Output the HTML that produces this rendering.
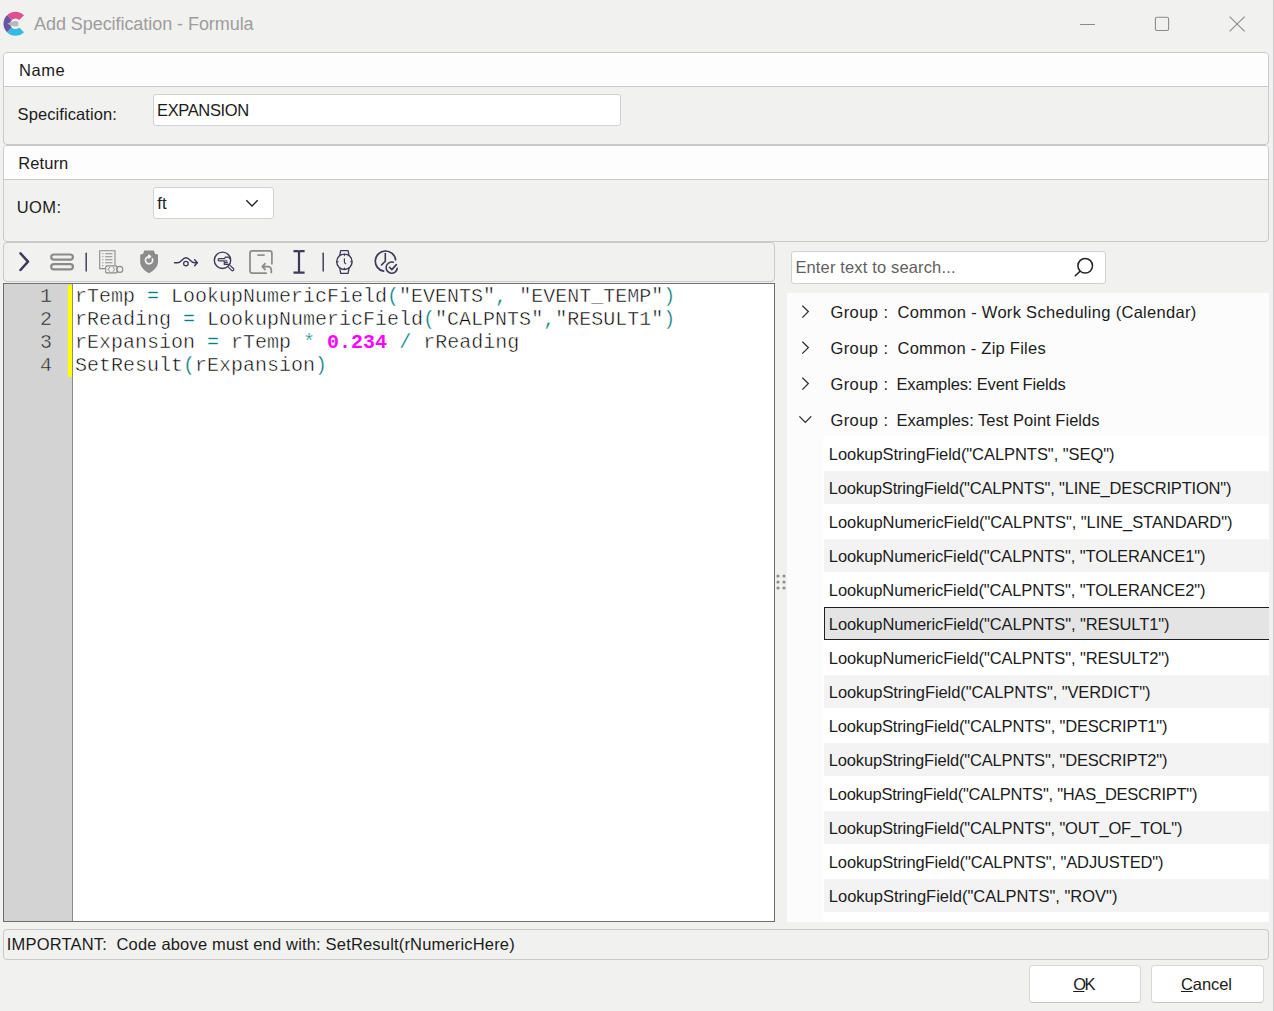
<!DOCTYPE html>
<html><head><meta charset="utf-8">
<style>
*{box-sizing:border-box;margin:0;padding:0}
html,body{width:1274px;height:1011px;overflow:hidden;background:#f1f1ef;font-family:"Liberation Sans",sans-serif;color:#1b1b1b}
.a{position:absolute}
.t{position:absolute;white-space:pre}
.panel{position:absolute;border:1px solid #c9c9c9;border-radius:4px;background:#f1f1ef;overflow:hidden}
.ph{position:absolute;left:0;right:0;top:0;background:#fdfdfd;border-bottom:1px solid #c9c9c9}
.inp{position:absolute;background:#fff;border:1px solid #d1d1d1;border-radius:3px}
.code{position:absolute;font-family:"Liberation Mono",monospace;font-size:20px;line-height:23px;white-space:pre;color:#000;-webkit-text-stroke:0.5px #fff}
.op{color:#008080;-webkit-text-stroke:0.3px #fff}
.num{color:#ff00ff;font-weight:bold;-webkit-text-stroke:0}
.ln{position:absolute;font-family:"Liberation Mono",monospace;font-size:20px;line-height:23px;color:#222;text-align:right;width:40px;-webkit-text-stroke:0.5px #d3d3d3}
.btn{position:absolute;background:#fff;border:1px solid #d8d8d8;border-bottom-color:#c6c6c6;border-radius:4px}
svg{position:absolute;overflow:visible}
</style></head><body>

<!-- title bar -->
<svg style="left:0;top:0" width="40" height="48" viewBox="0 0 40 48">
  <path d="M24.0 15.3 A12 12 0 0 0 7.0 15.3 L11.8 20.1 A5.2 5.2 0 0 1 19.2 20.1 Z" fill="#df4f92"/>
  <path d="M7.0 15.3 A12 12 0 0 0 7.0 32.3 L11.8 27.5 A5.2 5.2 0 0 1 11.8 20.1 Z" fill="#6b54a4"/>
  <path d="M7.0 32.3 A12 12 0 0 0 24.0 32.3 L19.2 27.5 A5.2 5.2 0 0 1 11.8 27.5 Z" fill="#33bce0"/>
  <path d="M7.5 23.8 C10 22.6 12 21 15.8 21 A2.8 2.8 0 0 1 15.8 26.6 C12 26.6 10 25 7.5 23.8 Z" fill="#b9b8bd"/>
</svg>
<div class="a" style="left:1080px;top:24px;width:15px;height:1px;background:#8a8a8a"></div>
<svg style="left:0;top:0" width="1274" height="48">
  <rect x="1155.4" y="17.2" width="13.2" height="13.3" rx="1.8" fill="none" stroke="#8a8a8a" stroke-width="1.1"/>
  <path d="M1229.6 16.6L1244.7 31.3M1244.7 16.6L1229.6 31.3" stroke="#8a8a8a" stroke-width="1.1"/>
</svg>
<div class="a" style="left:1273px;top:0;width:1px;height:1011px;background:#cdcdcd"></div>

<!-- Name panel -->
<div class="panel" style="left:3px;top:52px;width:1266px;height:93px">
  <div class="ph" style="height:34px"></div>
</div>
<div class="inp" style="left:153px;top:94px;width:468px;height:32px"></div>

<!-- Return panel -->
<div class="panel" style="left:3px;top:145px;width:1266px;height:97px">
  <div class="ph" style="height:34px"></div>
</div>
<div class="inp" style="left:153px;top:187px;width:121px;height:32px"></div>
<svg style="left:0;top:0" width="300" height="240">
  <path d="M246.3 200.3L252 206L257.7 200.3" fill="none" stroke="#222" stroke-width="1.4"/>
</svg>

<!-- toolbar -->
<div class="panel" style="left:3px;top:242px;width:772px;height:40px"></div>
<svg style="left:0;top:240px" width="420" height="42" viewBox="0 240 420 42">
  <g fill="none" stroke-linecap="round" stroke-linejoin="round">
    <!-- chevron -->
    <path d="M20.5 253.4L28 261.7L20.5 270" stroke="#3f3859" stroke-width="2.5"/>
    <!-- pills -->
    <rect x="51.2" y="254.5" width="21.7" height="5.2" rx="2.6" stroke="#8a8a8a" stroke-width="2.2"/>
    <rect x="51.2" y="264.1" width="21.7" height="5.3" rx="2.6" stroke="#8a8a8a" stroke-width="2.2"/>
    <!-- separators -->
    <path d="M86.2 253.3V271" stroke="#454060" stroke-width="1.5"/>
    <path d="M323.2 253.3V271" stroke="#454060" stroke-width="1.5"/>
    <!-- document -->
    <path d="M105 268.6H99.7V250.7H115V265" stroke="#8a8a8a" stroke-width="1.1" stroke-linecap="butt"/>
    <path d="M105.5 253.8H112M105.5 256.8H112M105.5 259.8H112M105.5 262.8H112" stroke="#8a8a8a" stroke-width="1.1"/>
    <path d="M102.7 253.8h.3M102.7 256.8h.3M102.7 259.8h.3M102.7 262.8h.3M102.7 265.6h.3" stroke="#8a8a8a" stroke-width="1.1"/>
    <rect x="105.7" y="265.9" width="11.3" height="7" rx="1" stroke="#8a8a8a" stroke-width="1.1"/>
    <path d="M109.6 267.4L108.2 269.4L109.6 271.4M113.2 267.4L114.6 269.4L113.2 271.4" stroke="#8a8a8a" stroke-width="1"/>
    <circle cx="119.8" cy="269.4" r="3" stroke="#8a8a8a" stroke-width="1.1"/>
    <!-- shield -->
    <path d="M144.2 250.5H153.8L155.2 254L158 254.4V262C158 267 153.5 270.8 149 273.3C144.5 270.8 140.2 267 140.2 262V254.4L143 254Z" fill="#8c8c8c" stroke="none"/>
    <path d="M152.4 258.9A3.6 3.6 0 1 1 149 256.6" stroke="#f4f4f4" stroke-width="1.7"/>
    <path d="M148.7 254.9L150.7 256.5L148.7 258.3Z" fill="#f4f4f4" stroke="#f4f4f4" stroke-width="1.2"/>
    <!-- wave -->
    <path d="M174.5 262.8H177.8C181.5 262.8 182.2 257.8 186 257.8C189.8 257.8 190.5 262.8 194.5 262.8H197" stroke="#3f3859" stroke-width="1.4"/>
    <path d="M194.6 259.8L197.4 262.8L194.6 265.8" stroke="#3f3859" stroke-width="1.4"/>
    <circle cx="185.9" cy="263.6" r="2.3" stroke="#3f3859" stroke-width="1.3"/>
    <!-- magnifier -->
    <circle cx="222.5" cy="260.3" r="8.2" stroke="#3f3859" stroke-width="1.4"/>
    <path d="M228.6 267.4L231.8 270.6A1.3 1.3 0 0 0 233.6 268.8L230.3 265.6" stroke="#3f3859" stroke-width="1.2"/>
    <path d="M224.3 260.8H219.2A1.1 1.1 0 0 1 219.2 258.6H224.7L225.2 257.2H228.5L230.2 258.8M225.5 260.8H227M224.3 260.8V264.4H229.2M225.5 262.6H227.3" stroke="#3f3859" stroke-width="1.2"/>
    <!-- box return -->
    <path d="M271.9 264.5V253.2A2.3 2.3 0 0 0 269.6 250.9H252.3A2.3 2.3 0 0 0 250 253.2V271A2.3 2.3 0 0 0 252.3 273.2H266.8" stroke="#8a8a8a" stroke-width="1.7" stroke-linecap="butt"/>
    <path d="M257.3 255.1H264.7" stroke="#8a8a8a" stroke-width="1.6" stroke-linecap="butt"/>
    <path d="M265.5 263.1L262.3 266.6L265.5 270.1M262.6 266.6H268A3.3 3.3 0 0 1 271.3 269.9V273.3" stroke="#8a8a8a" stroke-width="1.7" stroke-linecap="butt"/>
    <!-- I beam -->
    <path d="M293.5 251.2H297.4Q299 251.2 299 253V270.9Q299 272.7 297.4 272.7H293.5M304.6 251.2H300.6Q299 251.2 299 253M299 270.9Q299 272.7 300.6 272.7H304.6" stroke="#3f3859" stroke-width="2.2" stroke-linecap="butt"/>
    <!-- watch -->
    <circle cx="344.4" cy="261.8" r="7.7" stroke="#3f3859" stroke-width="1.4"/>
    <path d="M339.8 255.2L340.7 250.6H348.1L349 255.2M339.8 268.4L340.7 273.3H348.1L349 268.4" stroke="#3f3859" stroke-width="1.3"/>
    <path d="M344.4 258.8V261.8Q344.4 263.2 345.7 263.8" stroke="#3f3859" stroke-width="1.2"/>
    <path d="M344.4 254.3V255.6M344.4 268V269.3M336.9 261.8H338.2M350.6 261.8H351.9" stroke="#3f3859" stroke-width="1.1"/>
    <!-- clock check -->
    <path d="M395.6 259.8A10.2 10.2 0 1 0 383.6 271.2" stroke="#3f3859" stroke-width="1.7"/>
    <path d="M385.3 253.6V261.3L381.6 264.9" stroke="#3f3859" stroke-width="1.6"/>
    <path d="M393.3 262.3A5.6 5.6 0 1 0 397.3 268.2" stroke="#3f3859" stroke-width="1.6"/>
    <path d="M389.5 267.3L391.8 269.6L396.4 264.6" stroke="#3f3859" stroke-width="1.6"/>
  </g>
</svg>

<!-- editor -->
<div class="a" style="left:3px;top:283px;width:772px;height:639px;border:1px solid #6e6e6e;background:#fff"></div>
<div class="a" style="left:4px;top:284px;width:68px;height:637px;background:#d3d3d3"></div>
<div class="a" style="left:68px;top:285px;width:4px;height:92px;background:#ffff00"></div>
<div class="a" style="left:72px;top:284px;width:1px;height:637px;background:#8a8a8a"></div>
<div class="ln" style="left:12px;top:285px">1<br>2<br>3<br>4</div>
<div class="code" style="left:75px;top:285px">rTemp <span class="op">=</span> LookupNumericField<span class="op">(</span>"EVENTS"<span class="op">,</span> "EVENT_TEMP"<span class="op">)</span>
rReading <span class="op">=</span> LookupNumericField<span class="op">(</span>"CALPNTS"<span class="op">,</span>"RESULT1"<span class="op">)</span>
rExpansion <span class="op">=</span> rTemp <span class="op">*</span> <span class="num">0.234</span> <span class="op">/</span> rReading
SetResult<span class="op">(</span>rExpansion<span class="op">)</span></div>

<!-- splitter dots -->
<svg style="left:0;top:0" width="1274" height="1011">
  <g fill="#8e8e8e">
    <circle cx="778" cy="576" r="1.6"/><circle cx="784" cy="576" r="1.6"/>
    <circle cx="778" cy="582" r="1.6"/><circle cx="784" cy="582" r="1.6"/>
    <circle cx="778" cy="588" r="1.6"/><circle cx="784" cy="588" r="1.6"/>
  </g>
</svg>

<!-- right side -->
<div class="inp" style="left:791px;top:251px;width:315px;height:33px"></div>
<svg style="left:0;top:0" width="1274" height="300">
  <circle cx="1085.2" cy="265.8" r="7.3" fill="none" stroke="#222" stroke-width="1.5"/>
  <path d="M1080 271.2L1075.3 275.8" stroke="#222" stroke-width="1.6" stroke-linecap="round"/>
</svg>

<div class="a" style="left:787px;top:293px;width:482px;height:629px;background:#fcfcfc"></div>
<div class="a" style="left:823px;top:436px;width:446px;height:486px;background:#fff"></div>
<div class="a" style="left:824px;top:471px;width:445px;height:33px;background:#f3f3f3"></div>
<div class="a" style="left:824px;top:539px;width:445px;height:33px;background:#f3f3f3"></div>
<div class="a" style="left:824px;top:607px;width:445px;height:33px;background:#e4e4e4;border:1px solid #1f1f1f;border-right:0"></div>
<div class="a" style="left:824px;top:675px;width:445px;height:33px;background:#f3f3f3"></div>
<div class="a" style="left:824px;top:743px;width:445px;height:33px;background:#f3f3f3"></div>
<div class="a" style="left:824px;top:811px;width:445px;height:33px;background:#f3f3f3"></div>
<div class="a" style="left:824px;top:879px;width:445px;height:33px;background:#f3f3f3"></div>
<svg style="left:0;top:0" width="1274" height="440">
  <g fill="none" stroke="#2a2a2a" stroke-width="1.3">
    <path d="M802.3 305.6L808.3 311.6L802.3 317.6"/>
    <path d="M802.3 341.6L808.3 347.6L802.3 353.6"/>
    <path d="M802.3 377.6L808.3 383.6L802.3 389.6"/>
    <path d="M799.4 416.4L805.3 422.4L811.2 416.4"/>
  </g>
</svg>

<!-- status -->
<div class="panel" style="left:3px;top:929px;width:1266px;height:31px"></div>

<div class="btn" style="left:1029px;top:965px;width:112px;height:38px"></div>
<div class="btn" style="left:1151px;top:965px;width:113px;height:38px"></div>

<div class="t" style="left:34.00px;top:13.16px;font-size:18px;line-height:22px;letter-spacing:-0.057px;color:#9d9d9d">Add Specification - Formula</div>
<div class="t" style="left:19.10px;top:59.78px;font-size:16.5px;line-height:21px;letter-spacing:0.488px">Name</div>
<div class="t" style="left:17.60px;top:103.58px;font-size:16.5px;line-height:21px;letter-spacing:0.080px">Specification:</div>
<div class="t" style="left:157.10px;top:99.58px;font-size:16.5px;line-height:21px;letter-spacing:-0.380px">EXPANSION</div>
<div class="t" style="left:18.30px;top:152.68px;font-size:16.5px;line-height:21px;letter-spacing:0.070px">Return</div>
<div class="t" style="left:16.70px;top:196.68px;font-size:16.5px;line-height:21px;letter-spacing:0.435px">UOM:</div>
<div class="t" style="left:157.30px;top:193.38px;font-size:16.5px;line-height:21px">ft</div>
<div class="t" style="left:795.40px;top:257.28px;font-size:16.5px;line-height:21px;letter-spacing:0.148px;color:#5f5f5f">Enter text to search...</div>
<div class="t" style="left:830.40px;top:301.98px;font-size:16.5px;line-height:21px;letter-spacing:0.443px">Group :</div>
<div class="t" style="left:897.50px;top:301.98px;font-size:16.5px;line-height:21px;letter-spacing:0.301px">Common - Work Scheduling (Calendar)</div>
<div class="t" style="left:830.40px;top:337.98px;font-size:16.5px;line-height:21px;letter-spacing:0.443px">Group :</div>
<div class="t" style="left:897.50px;top:337.98px;font-size:16.5px;line-height:21px;letter-spacing:0.248px">Common - Zip Files</div>
<div class="t" style="left:830.40px;top:373.98px;font-size:16.5px;line-height:21px;letter-spacing:0.443px">Group :</div>
<div class="t" style="left:896.50px;top:373.98px;font-size:16.5px;line-height:21px;letter-spacing:-0.145px">Examples: Event Fields</div>
<div class="t" style="left:830.40px;top:409.98px;font-size:16.5px;line-height:21px;letter-spacing:0.443px">Group :</div>
<div class="t" style="left:896.50px;top:409.98px;font-size:16.5px;line-height:21px;letter-spacing:0.023px">Examples: Test Point Fields</div>
<div class="t" style="left:828.80px;top:444.48px;font-size:16.5px;line-height:21px;letter-spacing:-0.054px">LookupStringField("CALPNTS", "SEQ")</div>
<div class="t" style="left:828.80px;top:478.48px;font-size:16.5px;line-height:21px;letter-spacing:-0.183px">LookupStringField("CALPNTS", "LINE_DESCRIPTION")</div>
<div class="t" style="left:828.80px;top:512.48px;font-size:16.5px;line-height:21px;letter-spacing:-0.060px">LookupNumericField("CALPNTS", "LINE_STANDARD")</div>
<div class="t" style="left:828.80px;top:546.48px;font-size:16.5px;line-height:21px;letter-spacing:-0.096px">LookupNumericField("CALPNTS", "TOLERANCE1")</div>
<div class="t" style="left:828.80px;top:580.48px;font-size:16.5px;line-height:21px;letter-spacing:-0.096px">LookupNumericField("CALPNTS", "TOLERANCE2")</div>
<div class="t" style="left:828.80px;top:614.48px;font-size:16.5px;line-height:21px;letter-spacing:-0.086px">LookupNumericField("CALPNTS", "RESULT1")</div>
<div class="t" style="left:828.80px;top:648.48px;font-size:16.5px;line-height:21px;letter-spacing:-0.086px">LookupNumericField("CALPNTS", "RESULT2")</div>
<div class="t" style="left:828.80px;top:682.48px;font-size:16.5px;line-height:21px;letter-spacing:-0.090px">LookupStringField("CALPNTS", "VERDICT")</div>
<div class="t" style="left:828.80px;top:716.48px;font-size:16.5px;line-height:21px;letter-spacing:-0.165px">LookupStringField("CALPNTS", "DESCRIPT1")</div>
<div class="t" style="left:828.80px;top:750.48px;font-size:16.5px;line-height:21px;letter-spacing:-0.165px">LookupStringField("CALPNTS", "DESCRIPT2")</div>
<div class="t" style="left:828.80px;top:784.48px;font-size:16.5px;line-height:21px;letter-spacing:-0.245px">LookupStringField("CALPNTS", "HAS_DESCRIPT")</div>
<div class="t" style="left:828.80px;top:818.48px;font-size:16.5px;line-height:21px;letter-spacing:-0.168px">LookupStringField("CALPNTS", "OUT_OF_TOL")</div>
<div class="t" style="left:828.80px;top:852.48px;font-size:16.5px;line-height:21px;letter-spacing:-0.130px">LookupStringField("CALPNTS", "ADJUSTED")</div>
<div class="t" style="left:828.80px;top:886.48px;font-size:16.5px;line-height:21px;letter-spacing:0.007px">LookupStringField("CALPNTS", "ROV")</div>
<div class="t" style="left:6.80px;top:933.58px;font-size:16.5px;line-height:21px;letter-spacing:0.177px">IMPORTANT:  Code above must end with: SetResult(rNumericHere)</div>
<div class="t" style="left:1073.20px;top:973.58px;font-size:16.5px;line-height:21px;letter-spacing:-1.634px"><u>O</u>K</div>
<div class="t" style="left:1181.00px;top:973.58px;font-size:16.5px;line-height:21px;letter-spacing:-0.079px"><u>C</u>ancel</div>

</body></html>
